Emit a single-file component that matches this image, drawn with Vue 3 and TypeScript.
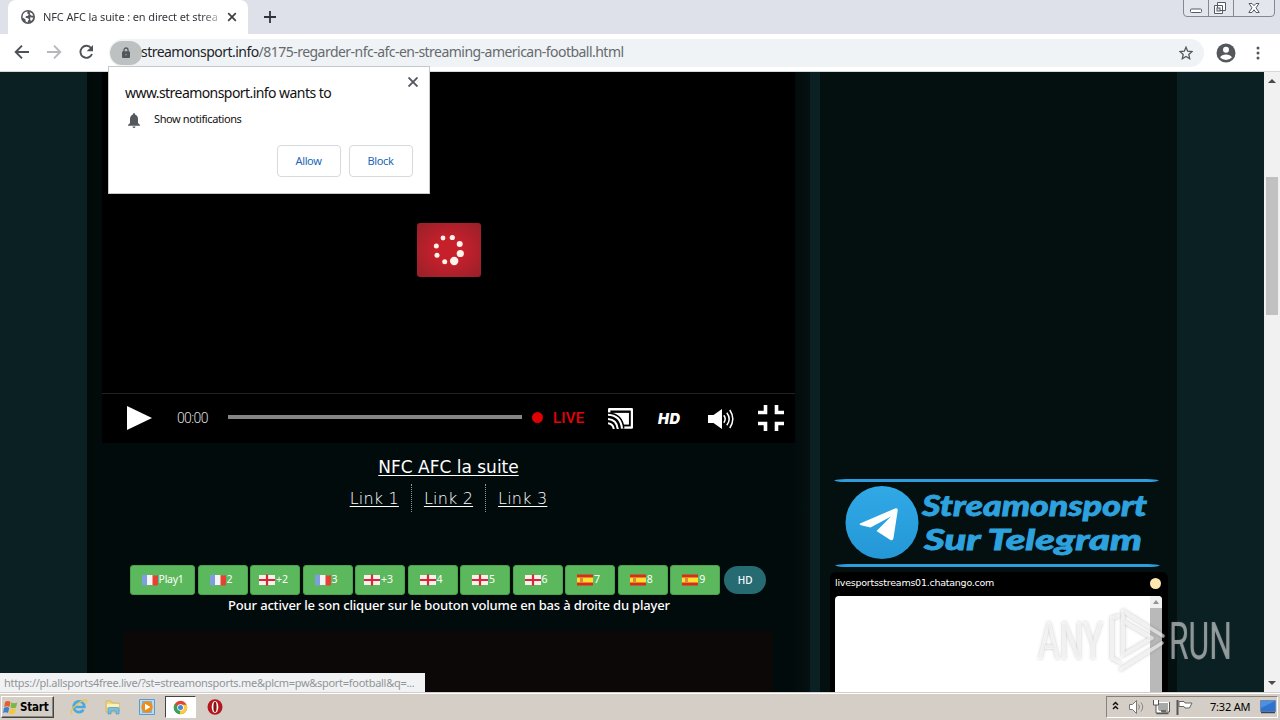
<script setup lang="ts">
type Flag = 'fr' | 'en' | 'es'

interface Stream {
  flag: Flag
  label: string
}

const streams: Stream[] = [
  { flag: 'fr', label: 'Play1' },
  { flag: 'fr', label: '2' },
  { flag: 'en', label: '+2' },
  { flag: 'fr', label: '3' },
  { flag: 'en', label: '+3' },
  { flag: 'en', label: '4' },
  { flag: 'en', label: '5' },
  { flag: 'en', label: '6' },
  { flag: 'es', label: '7' },
  { flag: 'es', label: '8' },
  { flag: 'es', label: '9' },
]

const links: string[] = ['Link 1', 'Link 2', 'Link 3']

const spinnerDots = [
  { x: 26, y: 15, r: 2.4 },
  { x: 35.3, y: 14.5, r: 2.6 },
  { x: 42.7, y: 21, r: 3 },
  { x: 43.3, y: 30.5, r: 3.6 },
  { x: 37.2, y: 38, r: 4.2 },
  { x: 27.7, y: 38.7, r: 2.5 },
  { x: 20, y: 32.3, r: 2.5 },
  { x: 19.3, y: 23, r: 2.5 },
]
</script>

<template>
  <div class="desktop">
    <header class="tabstrip">
      <div class="tab">
        <svg class="globe" width="14" height="14" viewBox="0 0 14 14">
          <circle cx="7" cy="7" r="7" fill="#54585d" />
          <path d="M2 4.200 4.200 2l2.600-.4L6 3.400l1.700.7-.6 1.700-2.200.4-.4 1.600 2.500.4 1.100 1.500-1.200 1L6.700 12.600 4.700 11.500 4.400 9.200 1.500 7.600z" fill="#fff" />
          <path d="M8.600 2.200 11 3.300l1.300 2.300-1.500.2-1.500-1zM9.200 7.300l3.100.5-1.500 3-1.500-.6z" fill="#fff" />
        </svg>
        <span class="tab-title">NFC AFC la suite : en direct et strea</span>
        <svg class="tab-close" width="10" height="10" viewBox="0 0 10 10"><path d="M1.200 1.200 8.800 8.800M8.800 1.200 1.200 8.800" stroke="#3c4043" stroke-width="1.700" /></svg>
      </div>
      <svg class="new-tab" width="12" height="12" viewBox="0 0 12 12"><path d="M6 0v12M0 6h12" stroke="#303438" stroke-width="1.800" /></svg>
      <svg class="window-buttons" width="94" height="18" viewBox="0 0 94 18">
        <path d="M1.500 0v13q0 3.500 3.500 3.500h84q3.500 0 3.500-3.500V0" fill="#e4e6ed" stroke="#838894" />
        <path d="M26.500 0v16M51.500 0v16" stroke="#838894" />
        <rect x="8.500" y="9" width="11" height="3.500" rx="1" fill="#fff" stroke="#555b66" />
        <path d="M35.500 2.500h8v8h-8z M32.500 5.500h8v8h-8z" fill="#fff" stroke="#555b66" />
        <rect x="35" y="8" width="3" height="3" fill="#e4e6ed" stroke="#555b66" />
        <path d="M67 3.500h3l2 2.200 2-2.200h3L74 7.800l3.200 4.700H74l-2-2.700-2 2.700h-3.200L70 7.800z" fill="#fff" stroke="#555b66" />
      </svg>
    </header>

    <div class="toolbar">
      <svg class="nav" width="100" height="38" viewBox="0 0 100 38" fill="none" stroke-width="1.900">
        <path d="M29 18H16M22 11.700 15.700 18l6.300 6.300" stroke="#4e5256" />
        <path d="M47 18h13M54 11.700 60.300 18 54 24.300" stroke="#b6b8bb" />
        <path d="M91.200 14.200A6 6 0 1 0 92 20" stroke="#4e5256" />
        <path d="M93 11v6.300h-6.300z" fill="#4e5256" />
      </svg>
      <div class="omnibox">
        <span class="lock">
          <svg width="8" height="11" viewBox="0 0 8 11"><path d="M2 5V3a2 2 0 0 1 4 0v2" fill="none" stroke="#53575b" stroke-width="1.300" /><rect y="4.200" width="8" height="6.800" rx="1" fill="#53575b" /><circle cx="4" cy="7.600" r=".9" fill="#8c8f92" /></svg>
        </span>
        <span class="url"><b>streamonsport.info</b>/8175-regarder-nfc-afc-en-streaming-american-football.html</span>
        <svg class="star" width="14" height="14" viewBox="0 0 14 14"><path d="M7 1.200 8.700 5.200 13 5.600 9.800 8.400 10.700 12.700 7 10.400 3.300 12.700 4.200 8.400 1 5.600 5.300 5.200z" fill="none" stroke="#54585d" stroke-width="1.300" /></svg>
      </div>
      <svg class="profile" width="20" height="20" viewBox="0 0 20 20">
        <circle cx="10" cy="10" r="9.500" fill="#54585d" />
        <circle cx="10" cy="6.800" r="3" fill="#fff" />
        <path d="M4 14.200q2-2.800 6-2.800t6 2.800Q13.800 17 10 17T4 14.200z" fill="#fff" />
      </svg>
      <svg class="kebab" width="4" height="14" viewBox="0 0 4 14" fill="#54585d"><circle cx="2" cy="2" r="1.500" /><circle cx="2" cy="7" r="1.500" /><circle cx="2" cy="12" r="1.500" /></svg>
    </div>

    <main class="viewport">
      <section class="main-col">
        <div class="player">
          <div class="screen">
            <svg class="spinner" width="64" height="54" viewBox="0 0 64 54">
              <defs><radialGradient id="red" r=".72"><stop offset=".3" stop-color="#c6202b" /><stop offset="1" stop-color="#94202a" /></radialGradient></defs>
              <rect width="64" height="54" rx="3" fill="url(#red)" />
              <circle v-for="(d, i) in spinnerDots" :key="i" :cx="d.x" :cy="d.y" :r="d.r" fill="#fff4ec" />
            </svg>
          </div>
          <div class="controls">
            <svg class="play" width="26" height="24" viewBox="0 0 26 24"><path d="M0 0 25 12 0 24z" fill="#fff" /></svg>
            <span class="time">00:00</span>
            <span class="progress"></span>
            <span class="live-dot"></span>
            <span class="live">LIVE</span>
            <svg class="cast" width="26" height="21" viewBox="0 0 26 21">
              <path d="M1.200 5V1.200h22.600v18.300H15" fill="none" stroke="#fff" stroke-width="2.400" stroke-linejoin="round" />
              <path d="M4.500 4.700h17v12h-6Q13.500 8.500 4.500 5.800z" fill="#fff" />
              <path d="M3 3.700h18.700v13.900h-6" fill="none" stroke="#000" stroke-width="1.500" />
              <path d="M0 6.700q13 .7 14 14" fill="none" stroke="#000" stroke-width="5" />
              <path d="M0 6.700q13 .7 14 14M0 11q8.800.6 9.800 10M0 15.200q5 .6 5.800 5.800" fill="none" stroke="#fff" stroke-width="2.100" />
            </svg>
            <span class="quality">HD</span>
            <svg class="volume" width="26" height="20" viewBox="0 0 26 20">
              <path d="M0 6h5.500L14 0v20l-8.500-6H0z" fill="#fff" />
              <path d="M15.800 6.300q2.700 3.700 0 7.400M18.800 3.700q4.800 6.300 0 12.600M21.800 1q6 9 0 18" fill="none" stroke="#fff" stroke-width="1.500" />
            </svg>
            <svg class="shrink" width="26" height="26" viewBox="0 0 26 26"><path d="M7.500 0v7.500H0M18.500 0v7.500H26M0 18.500h7.500V26M26 18.500h-7.500V26" fill="none" stroke="#fff" stroke-width="3.600" /></svg>
          </div>
        </div>
        <h1 class="title"><a>NFC AFC la suite</a></h1>
        <nav class="links"><span v-for="l in links" :key="l" class="link-cell"><a>{{ l }}</a></span></nav>
        <div class="streams">
          <button v-for="(s, i) in streams" :key="i" :class="['stream', { wide: i === 0 }]">
            <svg v-if="s.flag === 'fr'" width="16" height="12" viewBox="0 0 16 12"><path d="M0 1q3-1 5.500 0v10Q3 12 0 11z" fill="#7f9fdc" /><path d="M5 1h6v10H5z" fill="#f4f4f6" /><path d="M10.500 1q3 1 5.500 0v10q-3 1-5.500 0z" fill="#e44332" /></svg>
            <svg v-else-if="s.flag === 'en'" width="16" height="12" viewBox="0 0 16 12"><path d="M0 1h16v10H0z" fill="#f7f1ea" /><path d="M8 .5v11M0 6h16" stroke="#d8263a" stroke-width="2.200" /></svg>
            <svg v-else width="16" height="12" viewBox="0 0 16 12"><path d="M0 .5h16v11H0z" fill="#dc2c1c" /><path d="M0 3.500h16v5H0z" fill="#fbe032" /><path d="M3 4h3v4H3z" fill="#d68c39" /></svg>
            <span>{{ s.label }}</span>
          </button>
          <button class="hd">HD</button>
        </div>
        <p class="hint">Pour activer le son cliquer sur le bouton volume en bas à droite du player</p>
        <div class="ad"></div>
      </section>

      <aside class="side-col">
        <svg class="telegram" width="328" height="92" viewBox="0 0 328 92">
          <defs><linearGradient id="tg" x2="0" y2="1"><stop stop-color="#31a9e6" /><stop offset="1" stop-color="#2497d7" /></linearGradient></defs>
          <path d="M1 2.500Q5 1 13 1h301q8 0 12 1.500-4 1.500-12 1.500H13Q5 4 1 2.500zM2 87.500Q6 86 14 86h301q8 0 12 1.500-4 1.500-12 1.500H14Q6 89 2 87.500z" fill="#2d9ddd" />
          <circle cx="49" cy="44.500" r="36.500" fill="url(#tg)" />
          <path d="M27 45.500 62 30.500q3-1 2.700 2L60.500 60q-.7 3.600-3.500 1.700L43.500 53l14.500-14.500-20.500 11-9.500-2.200q-2-.7-1-1.800z" fill="#fff" />
          <g class="tg-text"><text x="89" y="38" textLength="225" lengthAdjust="spacingAndGlyphs">Streamonsport</text><text x="91" y="72" textLength="218" lengthAdjust="spacingAndGlyphs">Sur Telegram</text></g>
        </svg>
        <div class="chat">
          <div class="chat-head"><span>livesportsstreams01.chatango.com</span><i class="chat-status"></i></div>
          <div class="chat-body"><div class="chat-scroll"><svg width="12" height="12" viewBox="0 0 12 12"><path d="M3 8h6L6 4z" fill="#929292" /></svg></div></div>
        </div>
      </aside>

      <div class="page-scroll">
        <svg width="16" height="16" viewBox="0 0 16 16"><path d="M4 11h8L8 7z" fill="#4a4a4a" /></svg>
        <div class="thumb"></div>
        <svg width="16" height="16" viewBox="0 0 16 16"><path d="M4 5h8L8 9z" fill="#4a4a4a" /></svg>
      </div>
    </main>

    <div class="prompt">
      <svg class="prompt-close" width="10" height="10" viewBox="0 0 10 10"><path d="M.5.5 9.500 9.500M9.500.5.5 9.500" stroke="#54585d" stroke-width="1.900" /></svg>
      <div class="prompt-title">www.streamonsport.info wants to</div>
      <div class="prompt-row">
        <svg width="12" height="15" viewBox="0 0 12 15" fill="#54585d"><path d="M6 0q1.100 0 1.100 1.500Q10 2.500 10 6v4l2 2v.8H0V12l2-2V6q0-3.500 2.900-4.500Q4.900 0 6 0z" /><path d="M4.500 13.500h3Q7.300 15 6 15t-1.500-1.500z" /></svg>
        <span>Show notifications</span>
      </div>
      <div class="prompt-actions"><button>Allow</button><button>Block</button></div>
    </div>

    <div class="status">https://pl.allsports4free.live/?st=streamonsports.me&amp;plcm=pw&amp;sport=football&amp;q=...</div>

    <svg class="watermark" width="220" height="80" viewBox="0 0 220 80">
      <defs><filter id="soft" x="-10%" y="-10%" width="120%" height="120%"><feDropShadow dx="0" dy="0" stdDeviation="1.500" flood-color="#444" flood-opacity=".7" /></filter></defs>
      <g filter="url(#soft)">
        <g class="wm-text"><text x="8" y="55" textLength="65" lengthAdjust="spacingAndGlyphs">ANY</text><text x="139" y="55" textLength="63" lengthAdjust="spacingAndGlyphs">RUN</text></g>
        <path d="M82 54V14l6-2M93 51V7L133 32M93 51V17L122 34 93 51M82 54l7 4M91 65 132 39" fill="none" stroke="#fff" stroke-opacity=".55" stroke-width="3.500" stroke-linejoin="round" stroke-linecap="round" />
      </g>
    </svg>

    <footer class="taskbar">
      <button class="start">
        <svg width="16" height="15" viewBox="0 0 16 15"><path d="M2 2q3-2 5.500 0L6.500 7q-2.500-1.600-5.300 0z" fill="#e7602c" /><path d="M8.300 2.500q3 1.500 6 0L13 7.500q-3 1.500-5.500 0z" fill="#76b944" /><path d="M1 8q3-2 5.300 0L5 13q-2.500-1.500-5 0z" fill="#3882cf" /><path d="M7.200 8.500q2.700 1.500 5.700 0L11.600 13.500q-3 1.500-5.500 0z" fill="#f6c634" /></svg>
        <span>Start</span>
      </button>
      <div class="quick">
        <svg width="18" height="18" viewBox="0 0 18 18"><path d="M13.500 11.800A5.400 5.400 0 1 1 14.400 9H4.800" fill="none" stroke="#49a9df" stroke-width="2.700" /><path d="M2 16Q-1 12.500 7 6.500 15 0 16.500 2.200q.8 1-.8 3.500" fill="none" stroke="#eec44b" stroke-width="1.300" /></svg>
        <svg width="18" height="18" viewBox="0 0 18 18"><path d="M2 3h5l1 2h7v9H2z" fill="#f0d77f" stroke="#c9ad55" stroke-width=".7" /><path d="M3 6h12v3H3z" fill="#fbf0b8" /><path d="M4 16v-5q0-1.500 1.500-1.500h8q1.500 0 1.500 1.500v5h-3v-3H7v3z" fill="#74bfe2" stroke="#4990b9" stroke-width=".6" /></svg>
        <svg width="18" height="18" viewBox="0 0 18 18"><path d="M1.500 1.500h15v15h-15z" fill="#b9daf0" stroke="#5b9ccc" /><path d="M4 3h10v12H4z" fill="#77b5df" /><circle cx="9" cy="9" r="5.700" fill="#ef8b16" /><path d="M7 5.700 12.500 9 7 12.300z" fill="#fff" /></svg>
        <span class="active-task"><svg width="15" height="15" viewBox="0 0 18 18"><circle cx="9" cy="9" r="8" fill="#e34333" /><path d="M9 9 2 5A8 8 0 0 0 8.300 17z" fill="#35a455" /><path d="M9 9 8.300 17A8 8 0 0 0 16.300 5.700H9z" fill="#f8ce40" /><circle cx="9" cy="9" r="3.900" fill="#fff" /><circle cx="9" cy="9" r="3" fill="#4487de" /></svg></span>
        <svg width="18" height="18" viewBox="0 0 18 18"><ellipse cx="9" cy="9" rx="7.500" ry="7.800" fill="#b5171f" /><ellipse cx="9" cy="9" rx="3.300" ry="5.900" fill="#fff" /><ellipse cx="9" cy="9" rx="1.600" ry="5.200" fill="#8b1119" /></svg>
      </div>
      <div class="tray">
        <svg class="tray-icons" width="86" height="20" viewBox="0 0 86 20">
          <path d="M3 8 5.500 5.500 8 8M3 12 5.500 9.500 8 12" fill="none" stroke="#111" stroke-width="1.500" />
          <path d="M19.500 7.500h3l4-4v13l-4-4h-3z" fill="#fff" stroke="#777" /><path d="M28.500 7.500q2 2.500 0 5M31 5.500q3.500 4.500 0 9" fill="none" stroke="#888" />
          <path d="M47.500 5.500h11v9h-11z" fill="#a9a9a7" stroke="#fff" /><path d="M46.500 16.500h12M51 14h5" stroke="#555" stroke-width="1.300" /><path d="M43.500 3v5h5V3M46 8v8h4" fill="#fff" stroke="#555" /><path d="M59.500 5v10h-8" fill="none" stroke="#555" />
          <path d="M67.500 3v15" stroke="#555" stroke-width="2" /><path d="M69 4.500h5l1 1.500h7l-2.500 5h-4.500l-1-1.500h-5z" fill="#fff" stroke="#666" />
        </svg>
        <span class="clock">7:32 AM</span>
        <svg class="desktop-icon" width="16" height="14" viewBox="0 0 16 14"><path d="M.5.5h15v11H.5z" fill="#2e73d2" stroke="#6b89ad" /><path d="M1 1h14L1 8z" fill="#4d8fe1" /><path d="M1 12.500h14" stroke="#354454" stroke-width="1.500" /></svg>
      </div>
    </footer>
  </div>
</template>

<style>
body { overflow: hidden; background: #0a2022; }
</style>

<style scoped>
.desktop { position: relative; width: 1280px; height: 720px; overflow: hidden; display: flex; flex-direction: column; font-family: "Noto Sans", "Open Sans", sans-serif; }
* { box-sizing: border-box; }
button { font-family: inherit; margin: 0; padding: 0; border: 0; }
svg { display: block; flex: none; }

.tabstrip { height: 34px; flex: none; background: #dee1e9; display: flex; align-items: flex-start; padding-left: 8px; }
.tab { width: 240px; height: 34px; flex: none; display: flex; align-items: center; background: #fff; border-radius: 8px 8px 0 0; padding: 0 11px 0 13px; }
.tab-title { margin-left: 8px; width: 178px; overflow: hidden; white-space: nowrap; font-size: 11px; line-height: 20px; letter-spacing: -0.12px; color: #35393d; mask-image: linear-gradient(90deg, #000 158px, rgba(0, 0, 0, 0.3) 176px); }
.tab-close { margin-left: auto; }
.new-tab { margin: 11px 0 0 16px; }
.window-buttons { margin-left: auto; margin-right: 4px; }

.toolbar { height: 38px; flex: none; display: flex; align-items: center; background: #fff; border-bottom: 1px solid #d6d9db; }
.omnibox { width: 1095px; height: 28px; margin-left: 9px; flex: none; display: flex; align-items: center; background: #f0f3f5; border-radius: 14px; }
.lock { width: 32px; height: 24px; margin-left: 1px; flex: none; display: flex; align-items: center; justify-content: center; background: #bdc1c2; border-radius: 12px; }
.url { margin: -2px 0 0 -1px; white-space: nowrap; font-size: 14px; line-height: 24px; letter-spacing: -0.53px; color: #666a6e; }
.url b { font-weight: 400; color: #202429; }
.star { margin-left: auto; margin-right: 11px; }
.profile { margin-left: 12px; }
.kebab { margin-left: 20px; }

.viewport { height: 620px; flex: none; display: grid; grid-template-columns: 723px 367px 87px 16px; justify-content: start; padding-left: 87px; background: #0a2022; }
.main-col { background: linear-gradient(90deg, #020908, #020b0c 15px, #020b0c 705px, #041011); overflow: hidden; }
.side-col { margin-left: 10px; background: #03100f; padding: 406px 0 0 13px; overflow: hidden; }
.page-scroll { grid-column: 4; }

.player { width: 693px; height: 371px; margin-left: 15px; background: #000; }
.screen { height: 322px; padding: 151px 0 0 315px; border-bottom: 1px solid #222; }
.controls { height: 48px; display: flex; align-items: center; padding-left: 25px; }
.time { width: 31px; margin-left: 24px; margin-top: -1px; font: 300 14px "Roboto", sans-serif; letter-spacing: -0.65px; color: #ddd; white-space: nowrap; }
.progress { width: 294px; height: 4px; margin: -2px 0 0 20px; background: #858585; }
.live-dot { width: 11px; height: 11px; margin: -1px 0 0 10px; border-radius: 50%; background: #df0000; }
.live { width: 33px; margin-left: 10px; font: 500 15px "Roboto", sans-serif; letter-spacing: 0.2px; color: #e90008; }
.cast { margin-left: 22px; }
.quality { width: 26px; margin-left: 24px; font: italic 900 14.500px "Inter", sans-serif; letter-spacing: 0.5px; color: #fff; }
.volume { margin: 2px 0 0 24px; }
.shrink { margin-left: 24px; }

.title { height: 24px; margin: 12px 0 0; text-align: center; font: 17px/25px "DejaVu Sans", sans-serif; color: #fff; }
.title a { text-decoration: underline; text-underline-offset: 2px; }
.links { height: 28px; margin-top: 5px; display: flex; justify-content: center; color: #fff; font: 200 16px/29px "DejaVu Sans", sans-serif; letter-spacing: 0.2px; }
.link-cell { padding: 0 12px; white-space: nowrap; }
.link-cell + .link-cell { border-left: 1px dotted #899; }
.link-cell a { text-decoration: underline; text-underline-offset: 2px; }

.streams { height: 30px; margin: 53px 0 0 43px; display: flex; gap: 2.520px; align-items: center; }
.stream { width: 50px; height: 30px; flex: none; display: flex; align-items: center; justify-content: center; gap: 1px; border-radius: 3px; background: #5cb85c; border: 1px solid #4aa44b; padding-right: 3px; color: #fff; font-size: 10.500px; line-height: 16px; }
.stream span { margin-top: -2px; }
.wide { width: 65px; padding-right: 0; }
.wide span { letter-spacing: -0.3px; }
.hd { width: 42px; height: 28px; margin-left: 1.500px; border-radius: 14px; background: #266b72; color: #fff; font-size: 10px; font-weight: 500; }
.hint { margin: 0; height: 22px; padding-left: 1px; text-align: center; font-size: 13px; font-weight: 500; line-height: 21px; letter-spacing: -0.17px; white-space: nowrap; color: #fff; }
.ad { width: 649px; height: 80px; margin: 14px 0 0 37px; background: #0b0807; }

.tg-text { font: italic 900 29px "Lato", sans-serif; fill: #2ea2df; stroke: #2ea2df; stroke-width: .8; }
.chat { width: 338px; height: 130px; margin: 2px 0 0 -3px; padding: 0 6px 0 5px; background: #000; border-radius: 6px 6px 0 0; }
.chat-head { height: 24px; display: flex; align-items: center; justify-content: space-between; padding-right: 1px; color: #fff; font: 9.500px "DejaVu Sans", sans-serif; letter-spacing: -0.25px; }
.chat-head span { margin-top: -3px; }
.chat-status { width: 11px; height: 11px; margin-top: -1px; border-radius: 50%; background: #ffe8b0; }
.chat-body { height: 106px; display: flex; justify-content: flex-end; background: #fff; border-radius: 4px 4px 0 0; overflow: hidden; }
.chat-scroll { width: 12px; background: linear-gradient(#f1f1f1 12px, #b9b9b9 12px); }

.page-scroll { height: 620px; width: 16px; display: flex; flex-direction: column; background: #f1f1f1; }
.thumb { width: 12px; height: 138px; margin: 89px 2px auto; background: #c1c1c1; }

.prompt { position: absolute; left: 108px; top: 66px; width: 322px; height: 128px; padding: 16px; background: #fff; border: 1px solid #c6c8ca; color: #111; }
.prompt-close { position: absolute; right: 11px; top: 10px; }
.prompt-title { height: 20px; font-size: 14px; line-height: 20px; letter-spacing: -0.56px; white-space: nowrap; }
.prompt-row { height: 18px; margin-top: 8px; padding-left: 3px; display: flex; align-items: center; gap: 14px; font-size: 11px; letter-spacing: -0.4px; line-height: 18px; }
.prompt-row span { margin-top: -2px; }
.prompt-actions { margin-top: 16px; display: flex; justify-content: flex-end; gap: 8px; }
.prompt-actions button { width: 64px; height: 32px; border: 1px solid #d6d9dd; border-radius: 4px; background: #fff; color: #1967b8; font-size: 11px; letter-spacing: -0.35px; padding: 0 1px 2px 0; }

.status { position: absolute; left: 0; top: 673px; width: 425px; height: 19px; padding-left: 4px; background: #f1f2f3; color: #929598; font-size: 11px; line-height: 20px; letter-spacing: -0.29px; white-space: nowrap; }
.watermark { position: absolute; left: 1030px; top: 604px; }
.wm-text { font: 400 51px "Roboto", sans-serif; fill: #fff; fill-opacity: .48; }

.taskbar { height: 28px; flex: none; display: flex; align-items: center; background: #d5cec6; border-top: 1px solid #d5cec6; box-shadow: inset 0 1px #fff; padding: 1px 2px 0 1px; }
.start { width: 53px; height: 22px; display: flex; align-items: center; gap: 1px; padding-left: 1px; background: #d5cec6; border: 1px solid; border-color: #fff #444 #444 #fff; box-shadow: inset -1px -1px #8a8680; font: bold 11.500px "DejaVu Sans Condensed", "DejaVu Sans", sans-serif; color: #000; }
.start span { letter-spacing: -0.2px; }
.quick { margin-left: 16px; display: flex; align-items: center; gap: 15.800px; }
.active-task { width: 31px; height: 22px; margin: 0 -6px; display: flex; align-items: center; justify-content: center; background: #fff; border: 1px solid; border-color: #444 #fff #fff #444; }
.tray { width: 172px; height: 22px; margin-left: auto; display: flex; align-items: center; padding-left: 3px; border: 1px solid; border-color: #85817b #fff #fff #85817b; font-size: 11px; color: #000; }
.tray-icons { margin-right: 1px; }
.clock { margin: -2px 0 0 13px; width: 42px; white-space: nowrap; letter-spacing: -0.2px; }
.desktop-icon { margin-left: 8px; }
</style>
